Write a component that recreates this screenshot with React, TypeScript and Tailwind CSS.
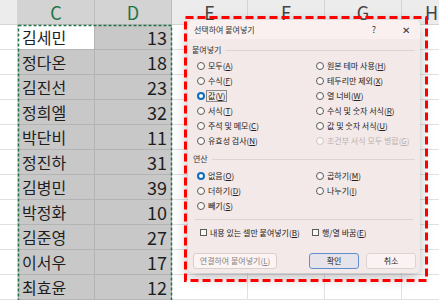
import React from "react";

const cols = [
  { w: 18, label: "", sel: false },
  { w: 77, label: "C", sel: true },
  { w: 77, label: "D", sel: true },
  { w: 76, label: "E", sel: false },
  { w: 77, label: "F", sel: false },
  { w: 77, label: "G", sel: false },
  { w: 60, label: "H", sel: false },
];

const rows: [string, number][] = [
  ["김세민", 13],
  ["정다온", 18],
  ["김진선", 23],
  ["정희엘", 32],
  ["박단비", 11],
  ["정진하", 31],
  ["김병민", 39],
  ["박정화", 10],
  ["김준영", 27],
  ["이서우", 17],
  ["최효윤", 12],
];

const font = { fontFamily: '"Noto Sans CJK KR", "Noto Sans", sans-serif' };

// 단축키 글자에 밑줄
const Label = ({ text, k }: { text: string; k: string }) => (
  <span>
    {text}(<u>{k}</u>)
  </span>
);

const Radio = ({
  text,
  k,
  checked = false,
  disabled = false,
  focus = false,
}: {
  text: string;
  k: string;
  checked?: boolean;
  disabled?: boolean;
  focus?: boolean;
}) => (
  <div
    className={`flex items-center gap-[3px] h-[15px] ${
      disabled ? "text-[#b9b1b1]" : "text-[#222]"
    }`}
  >
    {checked ? (
      <span className="w-[8px] h-[8px] rounded-full border-[2.5px] border-[#0f6cbd] bg-white shrink-0" />
    ) : (
      <span
        className={`w-[8px] h-[8px] rounded-full border bg-[#fbf7f7] shrink-0 ${
          disabled ? "border-[#cfc7c7]" : "border-[#5a5a5a]"
        }`}
      />
    )}
    <span
      className={
        focus ? "border border-[#8a8a8a] px-[1px] py-[1px] -ml-[2px]" : ""
      }
    >
      <Label text={text} k={k} />
    </span>
  </div>
);

const Check = ({ text, k }: { text: string; k: string }) => (
  <div className="flex items-center gap-[3px] h-[15px] text-[#222]">
    <span className="w-[7px] h-[7px] border border-[#5a5a5a] bg-[#fbf7f7] shrink-0" />
    <Label text={text} k={k} />
  </div>
);

const Dialog = () => (
  <div
    className="absolute left-[188px] top-[20px] w-[232px] h-[253px] bg-[#f3e9e8] rounded-[5px] shadow-[0_4px_14px_rgba(0,0,0,0.28)] text-[8px] leading-none overflow-hidden"
    style={font}
  >
    {/* 제목 표시줄 */}
    <div className="h-[19px] bg-[#f9f0ef] flex items-center pl-[6px] text-[#333]">
      <span>선택하여 붙여넣기</span>
      <span className="ml-auto mr-[26px] text-[9px]">?</span>
      <span className="mr-[10px] text-[10px]">✕</span>
    </div>

    {/* 붙여넣기 */}
    <div className="mt-[5px] h-[12px] flex items-center pl-[4px] pr-[5px] text-[#333]">
      <span>붙여넣기</span>
      <div className="flex-1 ml-[4px] h-px bg-[#ddd3d2]" />
    </div>
    <div className="mt-[2.5px] pl-[9px] grid grid-cols-[119px_1fr]">
      <Radio text="모두" k="A" />
      <Radio text="원본 테마 사용" k="H" />
      <Radio text="수식" k="F" />
      <Radio text="테두리만 제외" k="X" />
      <Radio text="값" k="V" checked focus />
      <Radio text="열 너비" k="W" />
      <Radio text="서식" k="T" />
      <Radio text="수식 및 숫자 서식" k="R" />
      <Radio text="주석 및 메모" k="C" />
      <Radio text="값 및 숫자 서식" k="U" />
      <Radio text="유효성 검사" k="N" />
      <Radio text="조건부 서식 모두 병합" k="G" disabled />
    </div>

    {/* 연산 */}
    <div className="mt-[4.5px] h-[12px] flex items-center pl-[5px] pr-[5px] text-[#333]">
      <span>연산</span>
      <div className="flex-1 ml-[4px] h-px bg-[#ddd3d2]" />
    </div>
    <div className="mt-[3.5px] pl-[9px] grid grid-cols-[119px_1fr]">
      <Radio text="없음" k="O" checked />
      <Radio text="곱하기" k="M" />
      <Radio text="더하기" k="D" />
      <Radio text="나누기" k="I" />
      <Radio text="빼기" k="S" />
    </div>

    <div className="mt-[5.5px] mx-[7px] h-px bg-[#ddd3d2]" />

    <div className="mt-[5px] pl-[12px] grid grid-cols-[112px_1fr]">
      <Check text="내용 있는 셀만 붙여넣기" k="B" />
      <Check text="행/열 바꿈" k="E" />
    </div>

    {/* 버튼 */}
    <div className="mt-[12.5px] flex items-center px-[5px]">
      <button className="w-[84px] h-[16px] rounded-[3px] border border-[#d8cfcf] bg-[#fbf4f3] text-[#8a8282]">
        <Label text="연결하여 붙여넣기" k="L" />
      </button>
      <button className="ml-auto w-[50px] h-[16px] rounded-[3px] border border-[#5f8fcf] bg-[#e7e3ea] text-[#222]">
        확인
      </button>
      <button className="ml-[7px] mr-[-1px] w-[50px] h-[16px] rounded-[3px] border border-[#dcd3d3] bg-[#fbf3f3] text-[#222]">
        취소
      </button>
    </div>
  </div>
);

export default function App() {
  return (
    <div
      className="relative w-[439px] h-[300px] overflow-hidden bg-white"
      style={font}
    >
      {/* 열 머리글 */}
      <div className="flex h-[25px]">
        {cols.map((c, i) => (
          <div
            key={i}
            style={{ width: c.w }}
            className={`shrink-0 flex items-center justify-center text-[18px] border-r border-b ${
              c.sel
                ? "bg-[#d3d3d3] text-[#217346] border-r-[#bdbdbd] border-b-[#bdbdbd]"
                : "bg-[#ececec] text-[#444] border-r-[#d4d4d4] border-b-[#d4d4d4]"
            }`}
          >
            {c.label}
          </div>
        ))}
      </div>

      {/* 셀 */}
      {[...rows, ["", 0] as [string, number]].map(([name, n], r) => (
        <div key={r} className="flex h-[25px]">
          {cols.map((c, i) => {
            if (i === 1)
              return (
                <div
                  key={i}
                  style={{ width: c.w }}
                  className={`shrink-0 flex items-center pl-[4px] text-[16px] text-[#1e1e1e] border-r border-b border-[#b4b4b4] ${
                    r === 0 ? "bg-white" : "bg-[#c8c8c8]"
                  }`}
                >
                  {name}
                </div>
              );
            if (i === 2)
              return (
                <div
                  key={i}
                  style={{ width: c.w }}
                  className="shrink-0 flex items-center justify-end pr-[4px] text-[18px] text-[#1e1e1e] bg-[#c8c8c8] border-r border-b border-[#b4b4b4]"
                >
                  {r < rows.length ? n : ""}
                </div>
              );
            return (
              <div
                key={i}
                style={{ width: c.w }}
                className="shrink-0 border-r border-b border-[#e1e1e1]"
              />
            );
          })}
        </div>
      ))}

      {/* 복사 영역 점선 */}
      <svg className="absolute left-[17px] top-[24px]" width="157" height="290">
        <rect
          x="1.5"
          y="1.5"
          width="153"
          height="300"
          fill="none"
          stroke="#217346"
          strokeWidth="1.5"
          strokeDasharray="3 2"
        />
      </svg>

      <Dialog />

      {/* 빨간 강조 테두리 */}
      <svg className="absolute left-[183px] top-[15px]" width="246" height="268">
        <rect
          x="2.5"
          y="2.5"
          width="241"
          height="263"
          fill="none"
          stroke="#ff0000"
          strokeWidth="3"
          strokeDasharray="8 4"
        />
      </svg>
    </div>
  );
}
